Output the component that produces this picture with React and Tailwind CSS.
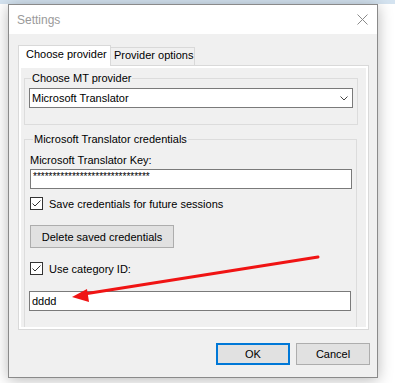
export default function App() {
  const stars = "******************************";
  return (
    <div className="relative w-[395px] h-[383px] bg-white overflow-hidden text-[11px] leading-[14px] text-black font-['Liberation_Sans',Arial,sans-serif]">
      <div className="h-[4px] bg-[#d4e3f0]" />
      <div className="ml-[8px] w-[370px] h-[374px] border border-[#8a8a8a] bg-[#f0f0f0] flex flex-col shadow-[0_2px_14px_rgba(0,0,0,0.28)]">
        {/* title bar */}
        <div className="h-[29px] shrink-0 bg-white flex items-center justify-between pl-[8px] pr-[9px]">
          <span className="text-[12px] text-[#9a9a9a]">Settings</span>
          <svg width="11" height="11" viewBox="0 0 11 11">
            <path d="M0.5 0.5 L10.5 10.5 M10.5 0.5 L0.5 10.5" stroke="#8a8a8a" strokeWidth="1" fill="none" />
          </svg>
        </div>
        {/* body */}
        <div className="flex-1 pl-[9px] pr-[7px] pt-[11px]">
          {/* tabs */}
          <div className="flex items-end h-[20px]">
            <div className="relative z-10 w-[93px] h-[21px] -mb-[1px] bg-white border border-b-0 border-[#d9d9d9] pl-[7px] pt-[1px] whitespace-nowrap">
              Choose provider
            </div>
            <div className="-ml-[1px] w-[85px] h-[18px] bg-[#f0f0f0] border border-b-0 border-[#d9d9d9] pl-[3px] whitespace-nowrap overflow-hidden">
              Provider options
            </div>
          </div>
          {/* panel */}
          <div className="w-[351px] h-[265px] border border-[#d9d9d9] bg-white p-[2px]">
            <div className="h-full bg-[#f0f0f0] overflow-hidden pt-[3px] pl-[3px]">
              <fieldset className="w-[333px] border border-[#dcdcdc] px-[4px] pb-[16px]">
                <legend className="ml-[2px] px-[1px] leading-[14px]">Choose MT provider</legend>
                <div className="mt-[3px] w-[324px] h-[20px] border border-[#7a7a7a] bg-white flex items-center justify-between pl-[2px] pr-[4px]">
                  <span>Microsoft Translator</span>
                  <svg width="8" height="5" viewBox="0 0 8 5">
                    <path d="M0.5 0.5 L4 4 L7.5 0.5" stroke="#444" strokeWidth="1" fill="none" />
                  </svg>
                </div>
              </fieldset>
              <fieldset className="mt-[7px] w-[333px] border border-[#dcdcdc] px-[4px] pb-[16px]">
                <legend className="ml-[4px] px-[1px] leading-[14px]">Microsoft Translator credentials</legend>
                <div className="mt-[7px] ml-[1px]">Microsoft Translator Key:</div>
                <div className="mt-[2px] ml-[1px] w-[322px] h-[20px] border border-[#7a7a7a] bg-white pl-[2px] flex items-start pt-[1px]">
                  <span className="text-[10px] leading-[12px]">{stars}</span>
                </div>
                <label className="mt-[8px] ml-[1px] flex items-center gap-[6px] h-[13px]">
                  <Check />
                  <span>Save credentials for future sessions</span>
                </label>
                <div className="mt-[15px] ml-[1px] w-[144px] h-[23px] border border-[#adadad] bg-[#e1e1e1] flex items-center justify-center">
                  Delete saved credentials
                </div>
                <label className="mt-[14px] ml-[1px] flex items-center gap-[6px] h-[13px]">
                  <Check />
                  <span>Use category ID:</span>
                </label>
                <div className="mt-[16px] w-[322px] h-[20px] border border-[#7a7a7a] bg-white pl-[2px] flex items-center">
                  dddd
                </div>
              </fieldset>
            </div>
          </div>
          {/* buttons */}
          <div className="mt-[13px] flex justify-end gap-[6px]">
            <div className="w-[74px] h-[22px] border-2 border-[#0078d7] bg-[#e1e1e1] flex items-center justify-center">OK</div>
            <div className="w-[74px] h-[22px] border border-[#adadad] bg-[#e1e1e1] flex items-center justify-center">Cancel</div>
          </div>
        </div>
      </div>
      {/* red annotation arrow */}
      <svg className="absolute inset-0 pointer-events-none" width="395" height="383" viewBox="0 0 395 383">
        <line x1="318" y1="257" x2="84" y2="294" stroke="#f01414" strokeWidth="3" strokeLinecap="round" />
        <polygon points="72,297 87,289 89,302" fill="#f01414" />
      </svg>
    </div>
  );
}

function Check() {
  return (
    <svg width="13" height="13" viewBox="0 0 13 13" className="shrink-0">
      <rect x="0.5" y="0.5" width="12" height="12" fill="white" stroke="#333" />
      <path d="M2.5 6.5 L5 9 L10.5 3.5" stroke="#333" strokeWidth="1" fill="none" />
    </svg>
  );
}
